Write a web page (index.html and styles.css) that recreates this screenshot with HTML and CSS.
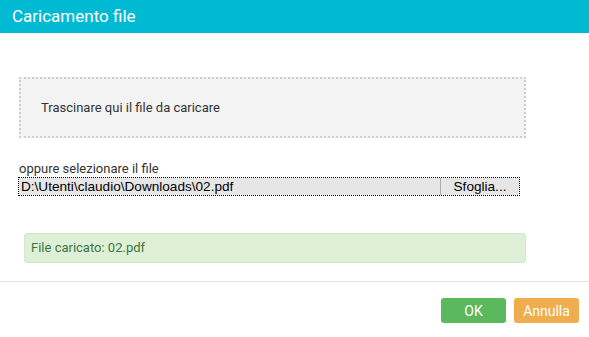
FILE: index.html
```html
<!DOCTYPE html>
<html lang="it">
<head>
  <meta charset="UTF-8" />
  <meta name="viewport" content="width=device-width, initial-scale=1.0"/>
  <title>Caricamento file</title>
  <link rel="stylesheet" href="styles.css">
</head>
<body>
  <div class="modal">
    <div class="modal-header">Caricamento file</div>

    <div class="modal-body">
      <div class="dropzone">Trascinare qui il file da caricare</div>

      <div class="file-label">oppure selezionare il file</div>
      <div class="file-input">
        <span class="file-path">D:\Utenti\claudio\Downloads\02.pdf</span>
        <span class="file-btn">Sfoglia...</span>
      </div>

      <div class="alert">File caricato: 02.pdf</div>
    </div>

    <!-- Footer buttons -->
    <div class="modal-footer">
      <button class="btn btn-ok">OK</button>
      <button class="btn btn-cancel">Annulla</button>
    </div>
  </div>
</body>
</html>
```

FILE: styles.css
```css
body {
  margin: 0;
  padding: 0;
  font-family: Roboto, "Liberation Sans", Arial, sans-serif;
  background: #fff;
  color: #333;
}

.modal {
  width: 589px;
}

.modal-header {
  height: 33px;
  line-height: 33px;
  padding-left: 12px;
  background-color: #00bad4;
  color: #fff;
  font-size: 17px;
}

.modal-body {
  padding: 44px 63px 18px 19px;
}

.dropzone {
  height: 57px;
  line-height: 57px;
  padding-left: 20px;
  border: 2px dotted #cfcfcf;
  background: #f3f3f3;
  font-size: 13px;
  color: #333;
}

.file-label {
  margin-top: 23px;
  font-size: 13px;
  line-height: 16px;
  color: #333;
}

/* fake file input with focus outline */
.file-input {
  display: flex;
  width: 500px;
  height: 17px;
  margin-left: -1px;
  border: 1px dotted #000;
  font-family: "Liberation Sans", Arial, sans-serif;
  font-size: 13.6px;
  line-height: 17px;
  color: #000;
}

.file-path {
  flex: 1;
  padding-left: 2px;
  background: #e6e6e6;
}

.file-btn {
  width: 78px;
  text-align: center;
  background: #e6e6e6;
  border-left: 1px solid #adadad;
}

.alert {
  margin: 37px 0 0 5px;
  height: 28px;
  line-height: 28px;
  padding-left: 6px;
  background: #dff0d8;
  border: 1px solid #d6e9c6;
  border-radius: 3px;
  color: #3c763d;
  font-size: 13px;
}

.modal-footer {
  border-top: 1px solid #e5e5e5;
  padding: 16px 10px 0 0;
  display: flex;
  justify-content: flex-end;
  gap: 8px;
}

.btn {
  width: 65px;
  height: 25px;
  border: none;
  border-radius: 3px;
  color: #fff;
  font-family: Roboto, Arial, sans-serif;
  font-size: 14px;
  cursor: pointer;
  padding: 0;
}

.btn-ok {
  background-color: #5cb85c;
}

.btn-cancel {
  background-color: #f0ad4e;
}
```
